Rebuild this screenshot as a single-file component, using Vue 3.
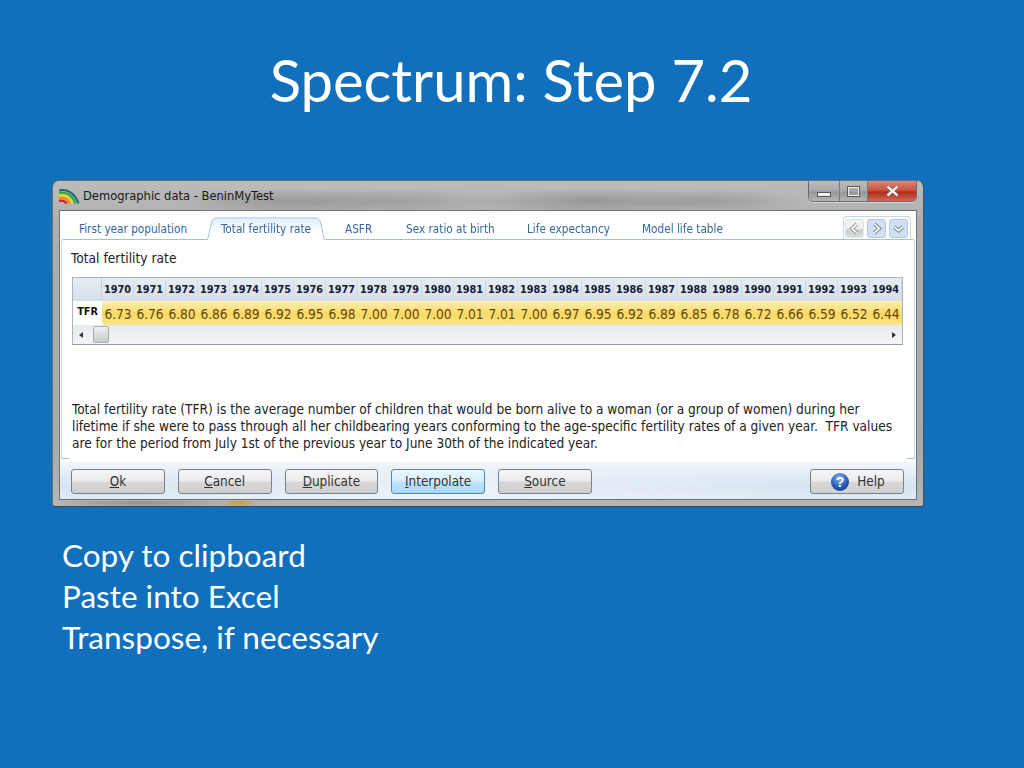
<script setup>
const tabs = [
  { label: 'First year population', w: 108 },
  { label: 'Total fertility rate', w: 92, active: true },
  { label: 'ASFR', w: 28 },
  { label: 'Sex ratio at birth', w: 88 },
  { label: 'Life expectancy', w: 82 },
  { label: 'Model life table', w: 82 },
]
const years = Array.from({ length: 25 }, (_, i) => 1970 + i)
const values = ['6.73','6.76','6.80','6.86','6.89','6.92','6.95','6.98','7.00','7.00','7.00','7.01','7.01','7.00','6.97','6.95','6.92','6.89','6.85','6.78','6.72','6.66','6.59','6.52','6.44']
const leftButtons = [
  { key: 'O', rest: 'k' },
  { key: 'C', rest: 'ancel' },
  { key: 'D', rest: 'uplicate' },
  { key: 'I', rest: 'nterpolate', focus: true },
  { key: 'S', rest: 'ource' },
]
</script>

<template>
  <main class="slide">
    <h1 class="title">Spectrum: Step 7.2</h1>

    <section class="window">
      <header class="titlebar">
        <svg class="logo" width="21" height="16" viewBox="0 0 21 16">
          <path d="M0 2.5 C8 0.5 16 5 19.5 15.5" fill="none" stroke="#1f6f78" stroke-width="2.2"/>
          <path d="M0 5 C7 3.5 13.5 7 16.5 15.5" fill="none" stroke="#37a83c" stroke-width="2.2"/>
          <path d="M0 7.6 C6 6.5 11 9 13.5 15.5" fill="none" stroke="#ecd81e" stroke-width="2.2"/>
          <path d="M0 10.2 C4.5 9.4 8.5 11 10.5 15.5" fill="none" stroke="#ee8a1c" stroke-width="2.2"/>
          <path d="M0 12.8 C3 12.4 6 13 7.5 15.5" fill="none" stroke="#d8241c" stroke-width="2.2"/>
        </svg>
        <span class="wintitle">Demographic data - BeninMyTest</span>
        <div class="controls">
          <div class="ctl ctl-min"><span class="glyph-min"></span></div>
          <div class="ctl ctl-max"><span class="glyph-max"></span></div>
          <div class="ctl ctl-close">
            <svg width="15" height="12" viewBox="0 0 15 12">
              <path d="M2.5 1.5 L12.5 10.5 M12.5 1.5 L2.5 10.5" stroke="#7a4a44" stroke-width="3.6"/>
              <path d="M2.5 1.5 L12.5 10.5 M12.5 1.5 L2.5 10.5" stroke="#f4f0ee" stroke-width="2.4"/>
            </svg>
          </div>
        </div>
      </header>

      <div class="client">
        <nav class="tabbar">
          <span
            v-for="t in tabs"
            :key="t.label"
            class="tab"
            :class="{ active: t.active }"
            :style="{ width: t.w + 'px' }"
          >{{ t.label }}</span>
          <div class="tabnav">
            <span class="navbtn nav-off">
              <svg width="13" height="13" viewBox="0 0 12 12">
                <path d="M8 2 L3.5 6 L8 10" fill="none" stroke="#8d8d8d" stroke-width="3.2"/>
                <path d="M8 2 L3.5 6 L8 10" fill="none" stroke="#fff" stroke-width="1.6"/>
              </svg>
            </span>
            <span class="navbtn">
              <svg width="13" height="13" viewBox="0 0 12 12">
                <path d="M4 2 L8.5 6 L4 10" fill="none" stroke="#6f7c88" stroke-width="3.2"/>
                <path d="M4 2 L8.5 6 L4 10" fill="none" stroke="#fff" stroke-width="1.6"/>
              </svg>
            </span>
            <span class="navbtn">
              <svg width="13" height="13" viewBox="0 0 12 12">
                <path d="M2 4.5 L6 8 L10 4.5" fill="none" stroke="#6f7c88" stroke-width="3.2"/>
                <path d="M2 4.5 L6 8 L10 4.5" fill="none" stroke="#fff" stroke-width="1.6"/>
              </svg>
            </span>
          </div>
        </nav>

        <div class="panel">
          <div class="panel-title">Total fertility rate</div>
          <div class="table">
            <div class="row head">
              <div class="rowhead"></div>
              <div v-for="y in years" :key="y" class="cell">{{ y }}</div>
            </div>
            <div class="row data">
              <div class="rowhead tfr">TFR</div>
              <div class="vals">
                <div v-for="(v, i) in values" :key="i" class="cell val">{{ v }}</div>
              </div>
            </div>
            <div class="scroll">
              <span class="arrow arrow-l"></span>
              <span class="thumb"></span>
              <span class="arrow arrow-r"></span>
            </div>
          </div>
          <p class="desc">Total fertility rate (TFR) is the average number of children that would be born alive to a woman (or a group of women) during her<br>lifetime if she were to pass through all her childbearing years conforming to the age-specific fertility rates of a given year.&nbsp; TFR values<br>are for the period from July 1st of the previous year to June 30th of the indicated year.</p>
        </div>

        <footer class="buttons">
          <button v-for="b in leftButtons" :key="b.key" class="btn" :class="{ focus: b.focus }"><u>{{ b.key }}</u>{{ b.rest }}</button>
          <button class="btn help">
            <svg width="20" height="20" viewBox="0 0 20 20">
              <defs>
                <radialGradient id="helpball" cx="45%" cy="30%" r="75%">
                  <stop offset="0" stop-color="#8fb6f0"/>
                  <stop offset="0.6" stop-color="#2b5fc0"/>
                  <stop offset="1" stop-color="#143a8c"/>
                </radialGradient>
              </defs>
              <circle cx="10" cy="10" r="9" fill="url(#helpball)"/>
              <text x="10" y="15" text-anchor="middle" class="helpq">?</text>
            </svg>
            <span>Help</span>
          </button>
        </footer>
      </div>
    </section>

    <ul class="notes">
      <li>Copy to clipboard</li>
      <li>Paste into Excel</li>
      <li>Transpose, if necessary</li>
    </ul>
  </main>
</template>

<style scoped>
.slide {
  width: 1024px;
  height: 768px;
  background: #1170bd;
  overflow: hidden;
  display: flex;
  flex-direction: column;
  font-family: "Lato", "Liberation Sans", sans-serif;
}
.title {
  margin: 0;
  padding-top: 46px;
  height: 180px;
  box-sizing: border-box;
  text-align: center;
  color: #fff;
  font-weight: 400;
  font-size: 58px;
  line-height: 68px;
  padding-right: 2px;
}
.window {
  margin-left: 52px;
  width: 872px;
  height: 327px;
  box-sizing: border-box;
  border: 1px solid #6a7076;
  border-bottom-color: #3f4449;
  border-right-color: #4a4f54;
  border-radius: 7px 7px 3px 3px;
  background:
    radial-gradient(ellipse 110px 13px at 235px 20px, rgba(110,110,110,.4), transparent),
    radial-gradient(ellipse 100px 13px at 345px 20px, rgba(110,110,110,.3), transparent),
    radial-gradient(ellipse 130px 13px at 540px 20px, rgba(110,110,110,.42), transparent),
    radial-gradient(ellipse 90px 12px at 660px 20px, rgba(110,110,110,.32), transparent),
    radial-gradient(ellipse 18px 4px at 186px 322px, #c9a030, transparent),
    radial-gradient(ellipse 90px 4px at 90px 322px, rgba(110,110,110,.5), transparent),
    linear-gradient(#bdbdbd, #aeaeae 12%, #aaaaaa 80%, #b4b4b4);
  padding: 0 6px 6px;
  display: flex;
  flex-direction: column;
  font-family: "DejaVu Sans", sans-serif;
  font-stretch: condensed;
  color: #222;
}
.titlebar {
  height: 29px;
  display: flex;
  align-items: flex-start;
  flex: none;
}
.logo { margin-top: 7px; flex: none; }
.wintitle {
  margin: 6px 0 0 3px;
  font-size: 12.8px;
  line-height: 17px;
  color: #1a1a1a;
}
.controls {
  margin-left: auto;
  display: flex;
  height: 20px;
  border: 1px solid #666c72;
  border-top: 0;
  border-radius: 0 0 5px 5px;
  overflow: hidden;
  box-shadow: 0 1px 0 rgba(255,255,255,.45);
}
.ctl { display: flex; align-items: center; justify-content: center; height: 100%; box-sizing: border-box; }
.ctl-min, .ctl-max {
  background: linear-gradient(#bcbcbc, #a8a8a8 50%, #969696 55%, #b4b4b4);
  border-right: 1px solid #777c80;
}
.ctl-min { width: 31px; }
.ctl-max { width: 28px; }
.ctl-close {
  width: 48px;
  background: linear-gradient(#d98a7c, #c9503e 48%, #b02a18 55%, #d06a58);
}
.glyph-min {
  width: 14px;
  height: 5px;
  margin-top: 6px;
  background: #f2f3f4;
  border: 1px solid #55595e;
  box-sizing: border-box;
}
.glyph-max {
  width: 13px;
  height: 11px;
  box-sizing: border-box;
  background: transparent;
  border: 2px solid #eceeef;
  outline: 1px solid #55595e;
  outline-offset: -1px;
}
.client {
  flex: 1;
  min-height: 0;
  background: #fff;
  border: 1px solid #6c7278;
  display: flex;
  flex-direction: column;
}
.tabbar {
  height: 28px;
  flex: none;
  display: flex;
  align-items: flex-end;
  gap: 33px;
  padding-left: 19px;
  position: relative;
  z-index: 1;
}
.tab {
  white-space: nowrap;
  font-size: 11.7px;
  color: #35669c;
  height: 24px;
  line-height: 28px;
  position: relative;
  z-index: 0;
  text-align: left;
}
.tab.active {
  text-align: center;
}
.tab.active::before {
  content: "";
  position: absolute;
  left: -13px;
  right: -13px;
  top: 0;
  bottom: -1px;
  z-index: -1;
  background: linear-gradient(#dfeefa, #fff 70%);
  border: 1px solid #9fbfe2;
  border-bottom: 1px solid #fff;
  border-radius: 5px 5px 0 0;
  transform: perspective(40px) rotateX(9deg);
  transform-origin: bottom;
}
.tabnav {
  position: absolute;
  right: 5px;
  bottom: 0;
  width: 68px;
  height: 23px;
  box-sizing: border-box;
  border: 1px solid #c4d6ea;
  border-bottom: 0;
  border-radius: 4px 4px 0 0;
  display: flex;
  align-items: flex-start;
  justify-content: space-between;
  padding: 2px 2px 0 1px;
}
.navbtn {
  width: 19px;
  height: 19px;
  display: flex;
  align-items: center;
  justify-content: center;
  background: #cfe0f2;
  border: 1px solid #b3c8de;
  border-radius: 3px;
  box-sizing: border-box;
}
.nav-off { background: linear-gradient(#f1f1f1, #f1f1f1 45%, #cfcfcf 60%, #dcdcdc); border-color: #dfe5ec; }
.panel {
  margin: 0 1px 3px;
  height: 220px;
  flex: none;
  box-sizing: border-box;
  border: 1px solid #a3c0e0;
  border-left-color: #c5d6ec;
  border-right-color: #c5d6ec;
  border-bottom-color: #fff;
  border-radius: 3px 3px 0 0;
  padding: 10px 10px 0;
  background: #fff;
  position: relative;
}
.panel::before,
.panel::after {
  content: "";
  position: absolute;
  bottom: -1px;
  width: 8px;
  height: 1px;
  background: #a3c0e0;
}
.panel::before { left: -1px; }
.panel::after { right: -1px; }
.panel-title {
  font-size: 13.7px;
  line-height: 17px;
  color: #222;
  margin: 0 0 10px -1px;
}
.table {
  width: 831px;
  height: 68px;
  box-sizing: border-box;
  border: 1px solid #a9b5c2;
  border-bottom-color: #8f9aa5;
  background: #eef1f4;
  overflow: hidden;
}
.row { display: flex; height: 23px; }
.rowhead { width: 29px; flex: none; box-sizing: border-box; }
.head { background: linear-gradient(#e6ecf2, #dfe6ee 50%, #d5dfe9); }
.head .rowhead { border-right: 1px solid #c8d2dd; }
.head .cell { border-right: 1px solid #d0d9e2; font-weight: 700; font-size: 10.8px; color: #142030; }
.cell {
  width: 32px;
  flex: none;
  box-sizing: border-box;
  text-align: center;
  line-height: 24px;
  white-space: nowrap;
}
.data { height: 24px; background: #fff; }
.tfr {
  font-size: 10.8px;
  font-weight: 700;
  line-height: 22px;
  text-align: center;
  color: #111;
}
.vals {
  flex: 1;
  display: flex;
  background: linear-gradient(#fdefb4, #fbd863 55%, #fce58a);
  border-radius: 3px 0 0 3px;
}
.val { font-size: 13.6px; color: #5e4a10; line-height: 26px; }
.scroll {
  height: 19px;
  box-sizing: border-box;
  display: flex;
  align-items: center;
  background: linear-gradient(#e8ebee, #f3f4f6);
}
.arrow { width: 0; height: 0; border-top: 3.5px solid transparent; border-bottom: 3.5px solid transparent; }
.arrow-l { margin-left: 6px; border-right: 4px solid #333; }
.arrow-r { margin-left: auto; margin-right: 6px; border-left: 4px solid #333; }
.thumb {
  width: 16px;
  height: 17px;
  margin-left: 10px;
  background: linear-gradient(#eef0f2, #c8ccd0);
  border: 1px solid #a8aeb4;
  border-radius: 2px;
  box-sizing: border-box;
}
.desc {
  margin: 56px 0 0;
  font-size: 13.55px;
  line-height: 17px;
  color: #222;
  white-space: nowrap;
}
.buttons {
  flex: 1;
  background:
    radial-gradient(ellipse 45% 60% at 45% 70%, rgba(255,255,255,.55), transparent),
    linear-gradient(#f3f7fb, #d5e3f2 65%, #e2ebf5);
  display: flex;
  align-items: flex-start;
  padding: 7px 12px 0 11px;
  gap: 13px;
}
.btn {
  width: 93.75px;
  height: 25px;
  flex: none;
  box-sizing: border-box;
  border: 1px solid #78828c;
  border-radius: 3px;
  background: linear-gradient(#f6f6f6, #ebebeb 48%, #d8d8d8 52%, #cfcfcf);
  font: inherit;
  font-size: 13.4px;
  color: #333;
  padding: 0;
}
.btn.focus {
  border-color: #4f88aa;
  background: linear-gradient(#eaf6fd, #d9f0fc 48%, #bee6fd 52%, #a7d9f5);
}
.help {
  margin-left: auto;
  display: flex;
  align-items: center;
  padding-left: 19px;
  gap: 7px;
}
.helpq { font: 700 14px "Liberation Sans", sans-serif; fill: #fff; }
.notes {
  list-style: none;
  margin: 0;
  padding: 28px 0 0 62px;
  color: #fff;
  font-size: 31.5px;
  line-height: 41px;
}
</style>
